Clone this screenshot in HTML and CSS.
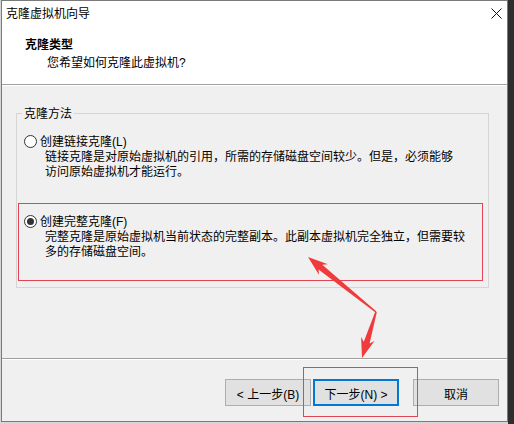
FILE: index.html
```html
<!DOCTYPE html>
<html lang="zh-CN">
<head>
<meta charset="utf-8">
<title>克隆虚拟机向导</title>
<link rel="stylesheet" href="styles.css">
</head>
<body>
<div class="window">
  <div class="titlebar">
    <span class="title">克隆虚拟机向导</span>
    <span class="close"><svg width="11" height="11" viewBox="0 0 11 11"><path d="M0.5 0.5L10.5 10.5M10.5 0.5L0.5 10.5" stroke="#111" stroke-width="1"/></svg></span>
  </div>
  <div class="header">
    <div class="h-title">克隆类型</div>
    <div class="h-sub">您希望如何克隆此虚拟机?</div>
  </div>
  <div class="content">
    <fieldset class="group">
      <legend>克隆方法</legend>
      <div class="option">
        <div class="opt-row"><span class="radio"></span><span class="opt-label">创建链接克隆(L)</span></div>
        <div class="opt-desc">链接克隆是对原始虚拟机的引用，所需的存储磁盘空间较少。但是，必须能够<br>访问原始虚拟机才能运行。</div>
      </div>
      <div class="option second">
        <div class="opt-row"><span class="radio checked"></span><span class="opt-label">创建完整克隆(F)</span></div>
        <div class="opt-desc">完整克隆是原始虚拟机当前状态的完整副本。此副本虚拟机完全独立，但需要较<br>多的存储磁盘空间。</div>
      </div>
    </fieldset>
  </div>
  <div class="footer">
    <button class="btn back">&lt; 上一步(B)</button>
    <button class="btn default">下一步(N) &gt;</button>
    <button class="btn cancel">取消</button>
  </div>
</div>
<div class="mark mark-option"></div>
<div class="mark mark-next"></div>
<svg class="arrows" width="514" height="424" viewBox="0 0 514 424">
  <polygon points="308,257 327.9,264.2 322.3,264.8 376.5,311.4 375.5,312.6 318.5,269.4 319.1,275" fill="#ef3b3b"/>
  <polygon points="362,358 374.5,340.9 369.6,343.6 376.8,312.2 375.2,311.8 363.8,341.8 361.1,336.9" fill="#ef3b3b"/>
</svg>
</body>
</html>
```
FILE: styles.css
```css
html, body {
  margin: 0;
  padding: 0;
}
body {
  position: relative;
  width: 514px;
  height: 424px;
  overflow: hidden;
  background: linear-gradient(to right, #d6d6d6 0 508px, #2e2e2e 508px);
  font-family: "Liberation Sans", "Noto Sans CJK SC", sans-serif;
  font-size: 12px;
  color: #000;
}
.window {
  box-sizing: border-box;
  margin-left: 1px;
  width: 507px;
  height: 422px;
  border: 1px solid #7a7a7a;
  display: flex;
  flex-direction: column;
  background: #f0f0f0;
}
.titlebar {
  flex: none;
  height: 25px;
  display: flex;
  align-items: flex-start;
  justify-content: space-between;
  background: #fff;
  padding-left: 4px;
}
.title {
  padding-top: 1px;
  line-height: 25px;
}
.close {
  width: 22px;
  height: 25px;
  display: flex;
  align-items: center;
  justify-content: center;
}
.header {
  flex: none;
  box-sizing: border-box;
  height: 59px;
  background: #fff;
  border-bottom: 1px solid #a0a0a0;
  padding: 11px 0 0 23px;
}
.h-title {
  font-weight: bold;
  line-height: 16px;
}
.h-sub {
  margin-top: 2px;
  padding-left: 22px;
  line-height: 16px;
}
.content {
  flex: 1;
  border-top: 1px solid #fff;
  padding: 20px 18px 0 14px;
}
.group {
  margin: 0;
  border: 1px solid #d5d5d5;
  padding: 0 0 27px 0;
}
.group legend {
  margin-left: 5px;
  padding: 1px 2px 0;
  line-height: 14px;
}
.option {
  margin-top: 14px;
  padding-left: 7px;
  line-height: 15px;
}
.option.second {
  margin-top: 35px;
}
.opt-row {
  display: flex;
  align-items: center;
  height: 15px;
}
.radio {
  box-sizing: border-box;
  width: 13px;
  height: 13px;
  border: 1px solid #333;
  border-radius: 50%;
  background: #fff;
  display: flex;
  align-items: center;
  justify-content: center;
  margin-top: -2px;
}
.radio.checked::after {
  content: "";
  width: 7px;
  height: 7px;
  border-radius: 50%;
  background: #333;
}
.opt-label {
  margin-left: 3px;
}
.opt-desc {
  padding-left: 21px;
  white-space: nowrap;
}
.footer {
  flex: none;
  border-top: 1px solid #a0a0a0;
  box-shadow: inset 0 1px #fff;
  padding: 20px 8px 15px 0;
  display: flex;
  justify-content: flex-end;
}
.btn {
  box-sizing: border-box;
  width: 86px;
  height: 27px;
  padding: 1px 0 0;
  margin: 0;
  border: 1px solid #adadad;
  background: #e1e1e1;
  font-family: inherit;
  font-size: 12px;
  color: #000;
}
.btn.back {
  margin-right: 2px;
}
.btn.default {
  border: 2px solid #0078d7;
}
.btn.cancel {
  margin-left: 14px;
}
.mark {
  position: absolute;
  box-sizing: border-box;
  border: 1px solid #e04555;
}
.mark-option {
  left: 18px;
  top: 203px;
  width: 465px;
  height: 78px;
}
.mark-next {
  left: 303px;
  top: 367px;
  width: 115px;
  height: 50px;
}
.arrows {
  position: absolute;
  left: 0;
  top: 0;
  pointer-events: none;
}
```
